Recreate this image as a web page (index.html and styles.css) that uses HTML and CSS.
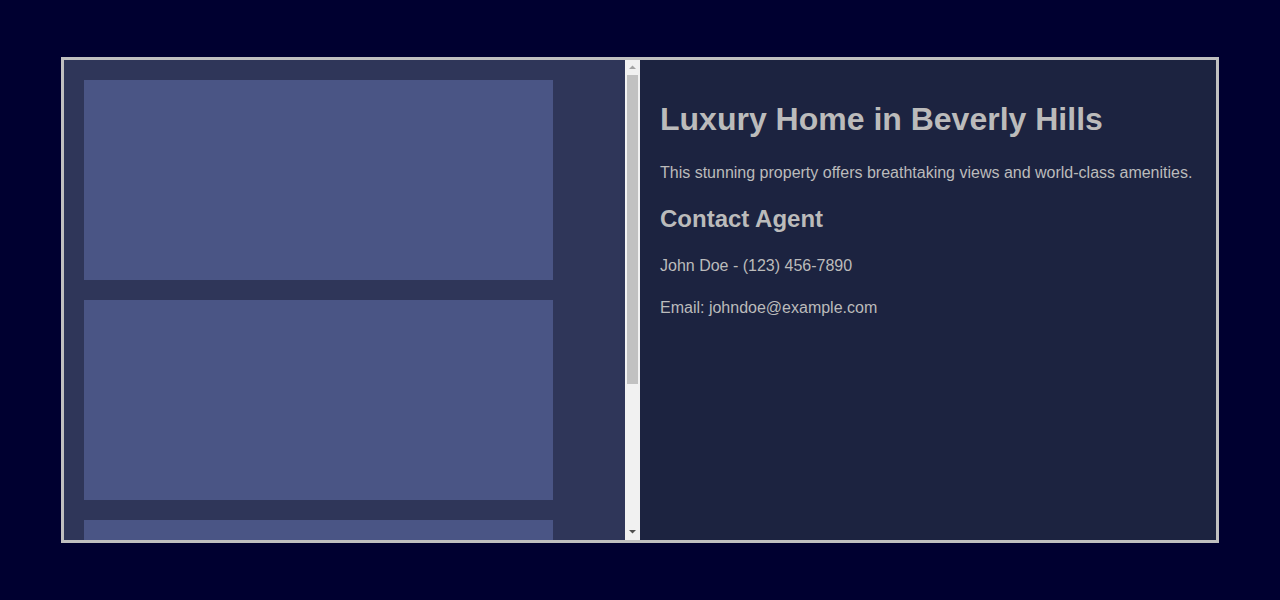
FILE: index.html
```html
<!DOCTYPE html>
<html lang="en">
<head>
<meta charset="utf-8">
<title>Luxury Home in Beverly Hills</title>
<link rel="stylesheet" href="styles.css">
</head>
<body>
<div class="container">
  <div class="gallery">
    <div class="gallery-scroll">
      <div class="photo"></div>
      <div class="photo"></div>
      <div class="photo"></div>
    </div>
    <div class="scrollbar" aria-hidden="true">
      <div class="sb-button">
        <svg width="15" height="15" viewBox="0 0 15 15"><polygon points="4,9 7.5,5.5 11,9" fill="#a3a3a3"/></svg>
      </div>
      <div class="sb-track">
        <div class="sb-thumb"></div>
      </div>
      <div class="sb-button">
        <svg width="15" height="15" viewBox="0 0 15 15"><polygon points="4,5 11,5 7.5,8.5" fill="#505050"/></svg>
      </div>
    </div>
  </div>
  <div class="details">
    <h1>Luxury Home in Beverly Hills</h1>
    <p>This stunning property offers breathtaking views and world-class amenities.</p>
    <h2>Contact Agent</h2>
    <p>John Doe - (123) 456-7890</p>
    <p>Email: johndoe@example.com</p>
  </div>
</div>
</body>
</html>
```
FILE: styles.css
```css
html, body {
  margin: 0;
  height: 100%;
}
body {
  background: #000030;
  font-family: "Liberation Sans", Arial, sans-serif;
  color: #bbbbbb;
  display: flex;
  align-items: center;
  justify-content: center;
}
.container {
  width: 90%;
  height: 80%;
  border: 3px solid #c0c0c0;
  display: flex;
}
.gallery {
  width: 50%;
  background: #2f3659;
  display: flex;
  min-height: 0;
}
.gallery-scroll {
  flex: 1;
  overflow: hidden;
  padding: 20px;
}
.scrollbar {
  width: 15px;
  flex: none;
  background: #f1f1f1;
  display: flex;
  flex-direction: column;
}
.sb-button {
  height: 15px;
  flex: none;
}
.sb-button svg {
  display: block;
}
.sb-track {
  flex: 1;
  padding: 0 2px;
}
.sb-thumb {
  height: 309px;
  background: #c1c1c1;
}
.photo {
  width: 90%;
  height: 200px;
  background: #4a5585;
  margin-bottom: 20px;
}
.details {
  width: 50%;
  background: #1c2340;
  padding: 20px;
  box-sizing: border-box;
}
h1 {
  font-size: 32px;
}
h2 {
  font-size: 24px;
}
p {
  line-height: 1.6;
}
```
